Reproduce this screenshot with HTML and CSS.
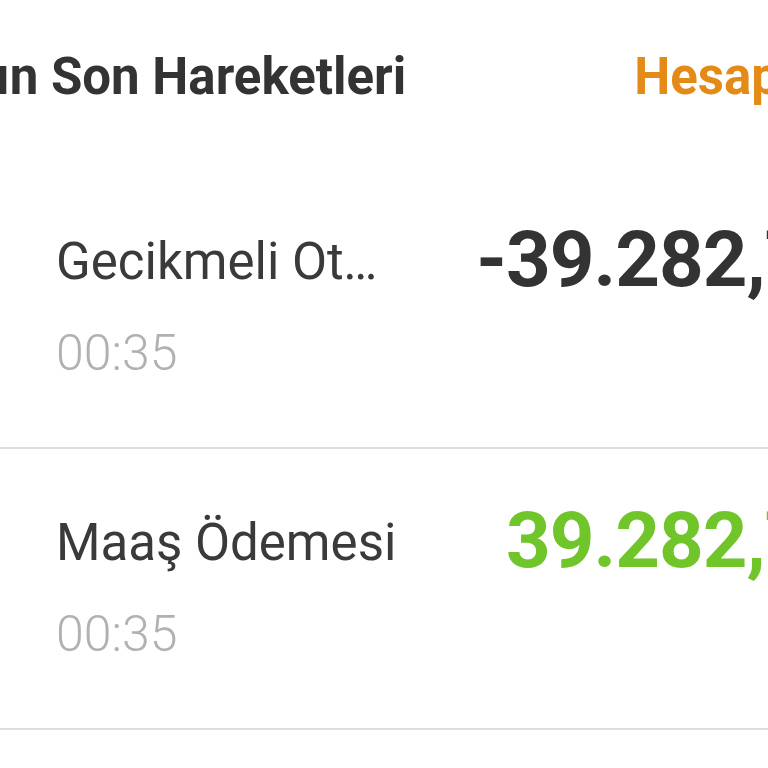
FILE: index.html
```html
<!DOCTYPE html>
<html lang="tr">
<head>
    <meta charset="UTF-8">
    <meta name="viewport" content="width=device-width, initial-scale=1.0">
    <title>Son Hareketler</title>
    <link rel="stylesheet" href="styles.css">
</head>
<body>
    <div class="screen">
        <!-- Section header -->
        <header class="section-head">
            <h2 class="section-title">Hesabın Son Hareketleri</h2>
            <a class="section-link" href="#">Hesap Hareketleri</a>
        </header>

        <!-- Transactions -->
        <ul class="tx-list">
            <li class="tx-row">
                <div class="tx-info">
                    <span class="tx-name">Gecikmeli Otomatik Ödeme</span>
                    <span class="tx-time">00:35</span>
                </div>
                <span class="tx-amount">-39.282,75 TL</span>
            </li>
            <li class="tx-row">
                <div class="tx-info">
                    <span class="tx-name">Maaş Ödemesi</span>
                    <span class="tx-time">00:35</span>
                </div>
                <span class="tx-amount income">39.282,75 TL</span>
            </li>
        </ul>
    </div>
</body>
</html>
```

FILE: styles.css
```css
/* Global Styles */
html, body {
    margin: 0;
    padding: 0;
    overflow: hidden;
}

body {
    font-family: Roboto, 'Noto Sans', Arial, sans-serif;
    background-color: #ffffff;
    color: #333333;
}

.screen {
    width: 1020px;
}

/* Section Header */
.section-head {
    display: flex;
    align-items: baseline;
    white-space: nowrap;
    padding-top: 51px;
    height: 168px;
    box-sizing: border-box;
}

.section-title {
    margin: 0 0 0 -150px;
    font-size: 51px;
    line-height: 52px;
    font-weight: 700;
    color: #333333;
}

.section-link {
    margin-left: 228px;
    font-size: 51px;
    line-height: 52px;
    font-weight: 700;
    color: #e48b17;
    text-decoration: none;
}

/* Transaction List */
.tx-list {
    list-style: none;
    margin: 0;
    padding: 0;
}

.tx-row {
    display: flex;
    align-items: flex-start;
    height: 281px;
    box-sizing: border-box;
    padding: 64px 63px 0 56px;
    border-bottom: 2px solid #dedede;
}

.tx-info {
    flex: 1;
    min-width: 0;
    display: flex;
    flex-direction: column;
    gap: 31px;
}

.tx-name {
    font-size: 51px;
    line-height: 60px;
    font-weight: 400;
    color: #3a3a3a;
    white-space: nowrap;
    overflow: hidden;
    text-overflow: ellipsis;
}

.tx-time {
    font-size: 50px;
    line-height: 60px;
    font-weight: 300;
    color: #b1b1b1;
}

.tx-amount {
    flex-shrink: 0;
    margin: -11px 0 0 95px;
    font-size: 78px;
    line-height: 78px;
    font-weight: 700;
    letter-spacing: -1px;
    color: #333333;
    white-space: nowrap;
}

.tx-amount.income {
    color: #70c52b;
}
```
